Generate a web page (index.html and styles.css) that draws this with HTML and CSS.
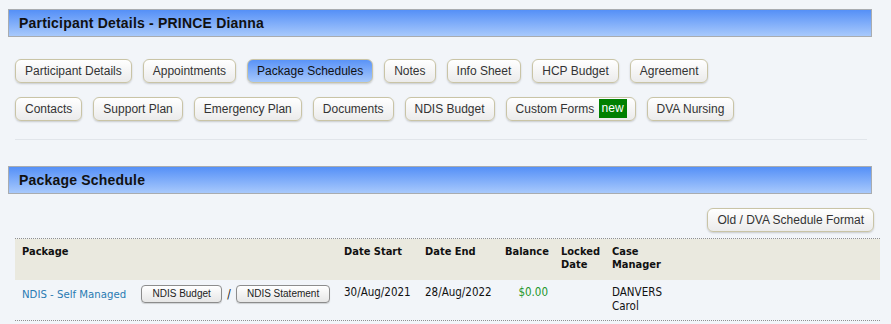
FILE: index.html
```html
<!DOCTYPE html>
<html lang="en">

<head>
    <meta charset="UTF-8">
    <meta name="viewport" content="width=device-width, initial-scale=1.0">
    <title>Package Schedule</title>
    <link rel="stylesheet" href="styles.css">
</head>

<body>
    <div class="bar">Participant Details - PRINCE Dianna</div>

    <div class="tabs">
        <div class="tab-row">
            <a class="btn">Participant Details</a>
            <a class="btn">Appointments</a>
            <a class="btn active">Package Schedules</a>
            <a class="btn">Notes</a>
            <a class="btn">Info Sheet</a>
            <a class="btn">HCP Budget</a>
            <a class="btn">Agreement</a>
        </div>
        <div class="tab-row">
            <a class="btn">Contacts</a>
            <a class="btn">Support Plan</a>
            <a class="btn">Emergency Plan</a>
            <a class="btn">Documents</a>
            <a class="btn">NDIS Budget</a>
            <a class="btn btn-new">Custom Forms <span class="badge">new</span></a>
            <a class="btn">DVA Nursing</a>
        </div>
    </div>

    <div class="divider"></div>

    <div class="bar bar2">Package Schedule</div>

    <div class="tools">
        <a class="btn">Old / DVA Schedule Format</a>
    </div>

    <table class="schedule">
        <colgroup>
            <col class="c-package">
            <col class="c-start">
            <col class="c-end">
            <col class="c-balance">
            <col class="c-locked">
            <col class="c-manager">
            <col>
        </colgroup>
        <tr class="head">
            <th>Package</th>
            <th>Date Start</th>
            <th>Date End</th>
            <th class="num">Balance</th>
            <th>Locked Date</th>
            <th>Case Manager</th>
            <th></th>
        </tr>
        <tr class="data">
            <td>
                <a class="pkg-link">NDIS - Self Managed</a>
                <a class="mini-btn first">NDIS Budget</a>
                <span class="slash">/</span>
                <a class="mini-btn">NDIS Statement</a>
            </td>
            <td>30/Aug/2021</td>
            <td>28/Aug/2022</td>
            <td class="num money">$0.00</td>
            <td></td>
            <td>DANVERS Carol</td>
            <td></td>
        </tr>
    </table>
</body>

</html>
```

FILE: styles.css
```css
body {
    margin: 0;
    background-color: #f2f5f9;
    font-family: "Liberation Sans", Arial, sans-serif;
    color: #333;
}

.bar {
    margin: 9px 19px 0 8px;
    height: 26px;
    line-height: 26px;
    padding-left: 10px;
    border: 1px solid #a9acb0;
    background: linear-gradient(to bottom, #5590f7, #a8c9fc);
    font-size: 14px;
    font-weight: bold;
    color: #111;
    letter-spacing: 0.2px;
}

.bar2 {
    margin-top: 26px;
}

.tabs {
    display: flex;
    flex-direction: column;
    gap: 14px;
    margin-top: 22px;
    padding-left: 15px;
}

.tab-row {
    display: flex;
    gap: 11px;
}

.btn {
    display: inline-block;
    height: 22px;
    line-height: 22px;
    padding: 0 9px;
    border: 1px solid #c9c4a6;
    border-radius: 6px;
    background: linear-gradient(to bottom, #ffffff, #ebebeb);
    box-shadow: 0 1px 2px rgba(0, 0, 0, 0.18);
    font-size: 12px;
    color: #333;
    white-space: nowrap;
    cursor: pointer;
}

.btn.active {
    background: linear-gradient(to bottom, #5a93f7, #a6c8fc);
    color: #111;
}

.btn-new {
    padding-right: 8px;
}

.badge {
    display: inline-block;
    height: 19px;
    line-height: 19px;
    padding: 0 3px;
    margin-left: 1px;
    background-color: #008000;
    color: #fff;
    vertical-align: top;
    margin-top: 1px;
}

.divider {
    margin: 18px 24px 0 15px;
    height: 1px;
    background-color: #e1e5ea;
}

.tools {
    display: flex;
    justify-content: flex-end;
    margin: 14px 17px 0 0;
}

.schedule {
    margin: 6px 11px 0 15px;
    width: 865px;
    table-layout: fixed;
    border-spacing: 0;
    border-top: 1px dotted #8f8f8f;
    border-bottom: 1px dotted #8f8f8f;
    font-family: "DejaVu Sans Condensed", "DejaVu Sans", sans-serif;
    font-stretch: condensed;
    font-size: 11px;
    color: #111;
}

.c-package { width: 322px; }
.c-start { width: 81px; }
.c-end { width: 80px; }
.c-balance { width: 56px; }
.c-locked { width: 51px; }
.c-manager { width: 65px; }

.schedule th,
.schedule td {
    vertical-align: top;
    text-align: left;
    padding: 6px 4px 0 7px;
}

.schedule th {
    line-height: 13px;
}

.head {
    height: 41px;
    background-color: #eae9df;
}

.data {
    height: 40px;
}

.schedule td {
    font-size: 11.5px;
    line-height: 14px;
    padding-top: 5px;
}

.schedule .num {
    text-align: right;
    padding-right: 6px;
}

.money {
    color: #22962a;
}

.pkg-link {
    color: #2a7bb3;
    font-size: 11.3px;
    cursor: pointer;
}

.mini-btn {
    display: inline-block;
    height: 16px;
    line-height: 16px;
    padding: 0 10px;
    border: 1px solid #8c8c8c;
    border-radius: 4px;
    background: linear-gradient(to bottom, #ffffff, #e6e6e6);
    box-shadow: 0 1px 1px rgba(0, 0, 0, 0.15);
    font-family: "Liberation Sans", Arial, sans-serif;
    font-stretch: normal;
    font-size: 10px;
    color: #222;
    vertical-align: middle;
    cursor: pointer;
}

.mini-btn.first {
    margin-left: 12px;
}

.slash {
    margin: 0 2px;
}
```
